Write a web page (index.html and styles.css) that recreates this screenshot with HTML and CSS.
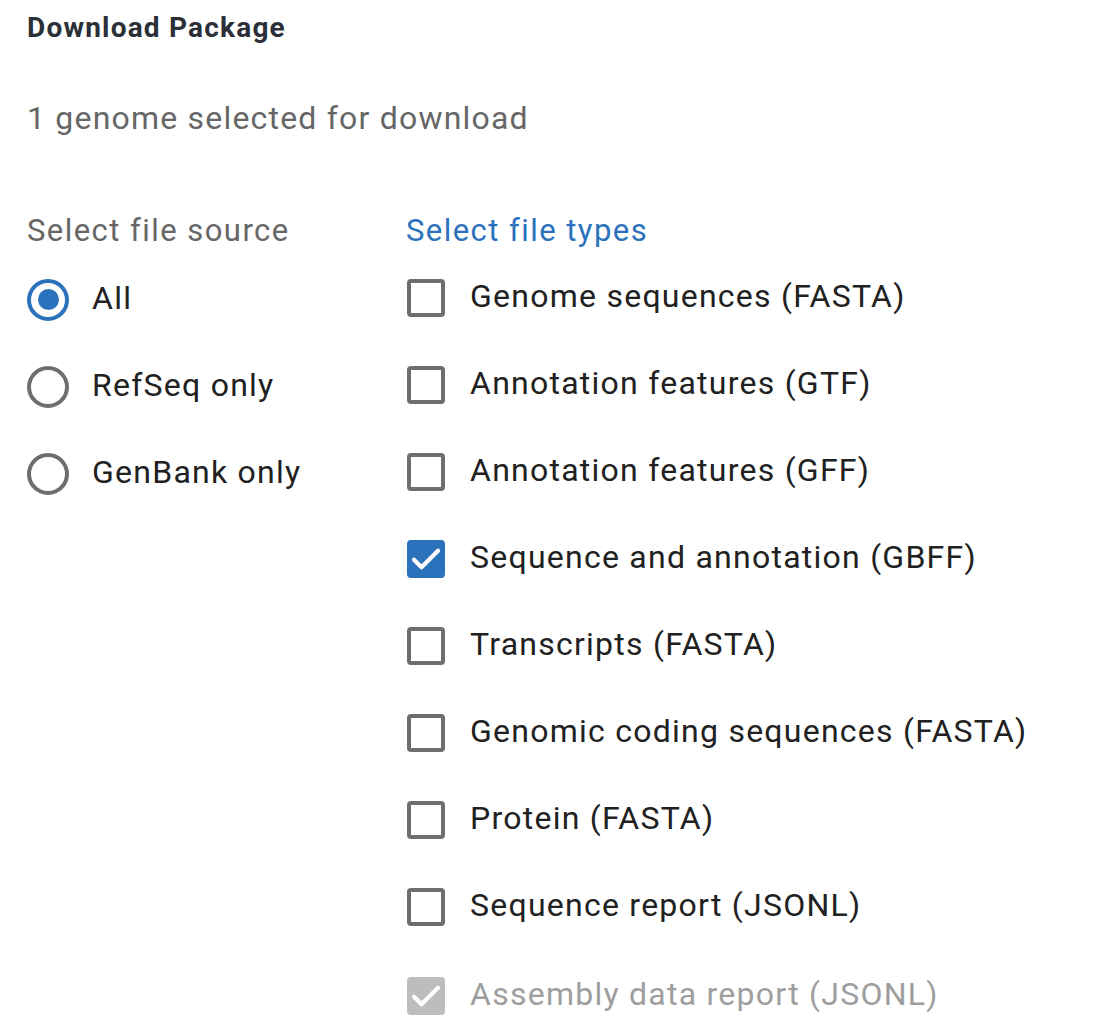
FILE: index.html
```html
<!DOCTYPE html>
<html>
<head>
<meta charset="utf-8">
<link rel="stylesheet" href="styles.css">
</head>
<body>
<div class="panel">
  <h1 class="title">Download Package</h1>
  <p class="subtitle">1 genome selected for download</p>
  <div class="columns">
    <div class="col col-source">
      <div class="col-head">Select file source</div>
      <div class="row"><span class="radio checked"></span><span class="label">All</span></div>
      <div class="row"><span class="radio"></span><span class="label">RefSeq only</span></div>
      <div class="row"><span class="radio"></span><span class="label">GenBank only</span></div>
    </div>
    <div class="col col-types">
      <div class="col-head blue">Select file types</div>
      <div class="row"><span class="box"></span><span class="label">Genome sequences (FASTA)</span></div>
      <div class="row"><span class="box"></span><span class="label">Annotation features (GTF)</span></div>
      <div class="row"><span class="box"></span><span class="label">Annotation features (GFF)</span></div>
      <div class="row"><span class="box checked"><svg viewBox="0 0 24 24" class="tick"><path d="M4 12.5l5 5L20 6.5" fill="none" stroke="#fff" stroke-width="2.8" stroke-linecap="round" stroke-linejoin="round"/></svg></span><span class="label">Sequence and annotation (GBFF)</span></div>
      <div class="row"><span class="box"></span><span class="label">Transcripts (FASTA)</span></div>
      <div class="row"><span class="box"></span><span class="label">Genomic coding sequences (FASTA)</span></div>
      <div class="row"><span class="box"></span><span class="label">Protein (FASTA)</span></div>
      <div class="row"><span class="box"></span><span class="label">Sequence report (JSONL)</span></div>
      <div class="row disabled"><span class="box checked"><svg viewBox="0 0 24 24" class="tick"><path d="M4 12.5l5 5L20 6.5" fill="none" stroke="#fff" stroke-width="2.8" stroke-linecap="round" stroke-linejoin="round"/></svg></span><span class="label">Assembly data report (JSONL)</span></div>
    </div>
  </div>
</div>
</body>
</html>
```

FILE: styles.css
```css
html, body {
  margin: 0;
  padding: 0;
  background: #fff;
}
body {
  font-family: Roboto, "Liberation Sans", Arial, sans-serif;
}
.panel {
  padding: 9px 0 0 27px;
}
.title {
  margin: 0;
  font-size: 28px;
  font-weight: 700;
  line-height: 38px;
  letter-spacing: 1.2px;
  color: #2b3038;
}
.subtitle {
  margin: 51px 0 0 0;
  font-size: 32px;
  line-height: 40px;
  letter-spacing: 1.2px;
  color: #666;
}
.columns {
  display: flex;
  margin-top: 71px;
}
.col-source {
  width: 379px;
}
.col-head {
  font-size: 31px;
  line-height: 44px;
  letter-spacing: 1.45px;
  color: #666;
  margin-bottom: 1px;
}
.col-head.blue {
  color: #2c71bb;
}
.row {
  display: flex;
  align-items: center;
  height: 87px;
}
.col-source .row {
  position: relative;
  top: 2px;
}
.label {
  font-size: 32px;
  letter-spacing: 1.25px;
  color: #212121;
  position: relative;
  top: -2px;
}
.radio {
  box-sizing: border-box;
  width: 42px;
  height: 42px;
  border: 4px solid #6e6e6e;
  border-radius: 50%;
  margin-right: 23px;
  display: flex;
  align-items: center;
  justify-content: center;
  flex-shrink: 0;
}
.radio.checked {
  border-color: #2c71bb;
}
.radio.checked::after {
  content: "";
  width: 21px;
  height: 21px;
  border-radius: 50%;
  background: #2c71bb;
}
.box {
  box-sizing: border-box;
  width: 38px;
  height: 38px;
  border: 4px solid #6e6e6e;
  border-radius: 4px;
  margin: 0 25px 0 1px;
  display: flex;
  align-items: center;
  justify-content: center;
  flex-shrink: 0;
}
.box.checked {
  background: #2c71bb;
  border-color: #2c71bb;
}
.tick {
  width: 36px;
  height: 36px;
  flex-shrink: 0;
}
.disabled .box.checked {
  background: #bdbdbd;
  border-color: #bdbdbd;
}
.disabled .label {
  color: #9e9e9e;
}
.row.disabled {
  margin-top: 2px;
}
```
